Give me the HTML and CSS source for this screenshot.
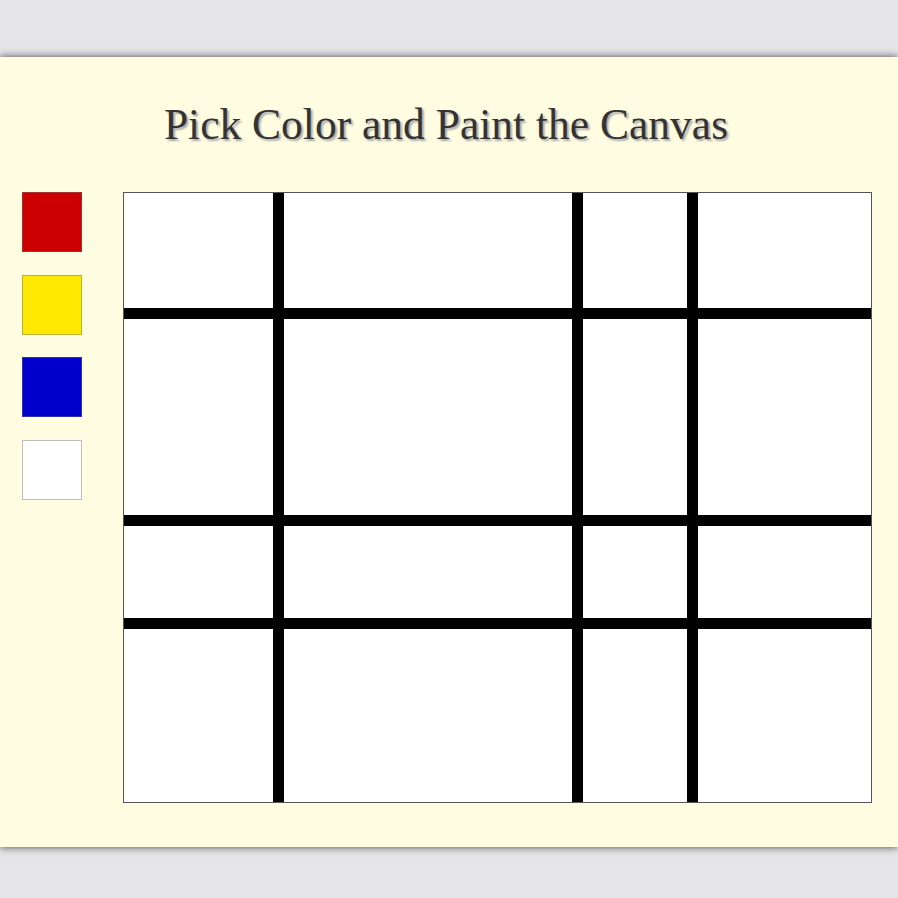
FILE: index.html
```html
<!DOCTYPE html>
<html>
<head>
<meta charset="utf-8">
<link rel="stylesheet" href="styles.css">
</head>
<body>
<div class="panel">
  <h1 class="title">Pick Color and Paint the Canvas</h1>
  <div class="workspace">
    <div class="palette">
      <div class="swatch red"></div>
      <div class="swatch yellow"></div>
      <div class="swatch blue"></div>
      <div class="swatch white"></div>
    </div>
    <div class="canvas">
      <div class="cell"></div><div class="cell"></div><div class="cell"></div><div class="cell"></div>
      <div class="cell"></div><div class="cell"></div><div class="cell"></div><div class="cell"></div>
      <div class="cell"></div><div class="cell"></div><div class="cell"></div><div class="cell"></div>
      <div class="cell"></div><div class="cell"></div><div class="cell"></div><div class="cell"></div>
    </div>
  </div>
</div>
</body>
</html>
```

FILE: styles.css
```css
html, body {
  margin: 0;
  padding: 0;
  background: #e6e6e9;
}
body {
  padding: 57px 0 51px;
}
.panel {
  height: 790px;
  box-sizing: border-box;
  padding-top: 43px;
  background: #fffde1;
  box-shadow: 0 0 8px rgba(40, 40, 40, 0.85);
}
.title {
  margin: 0;
  padding-right: 6px;
  font-family: "Liberation Serif", "Times New Roman", serif;
  font-weight: normal;
  font-size: 43.5px;
  line-height: 48px;
  text-align: center;
  color: #333;
  text-shadow: 2px 2px 2px #a8a8a8;
}
.workspace {
  margin-top: 44px;
  display: flex;
  align-items: flex-start;
  padding-left: 22px;
}
.palette {
  display: flex;
  flex-direction: column;
  gap: 22.7px;
  width: 60px;
  margin-right: 41px;
}
.swatch {
  width: 60px;
  height: 60px;
  box-sizing: border-box;
  border: 1px solid rgba(110, 110, 110, 0.45);
}
.red { background: #cc0000; }
.yellow { background: #ffe800; }
.blue { background: #0000cc; }
.white { background: #ffffff; }
.canvas {
  display: grid;
  grid-template-columns: 149px 288px 104px 173px;
  grid-template-rows: 115px 196px 92px 173px;
  gap: 11px;
  background: #000;
  border: 1px solid #555;
  width: 747px;
  height: 609px;
}
.cell {
  background: #fff;
}
```
